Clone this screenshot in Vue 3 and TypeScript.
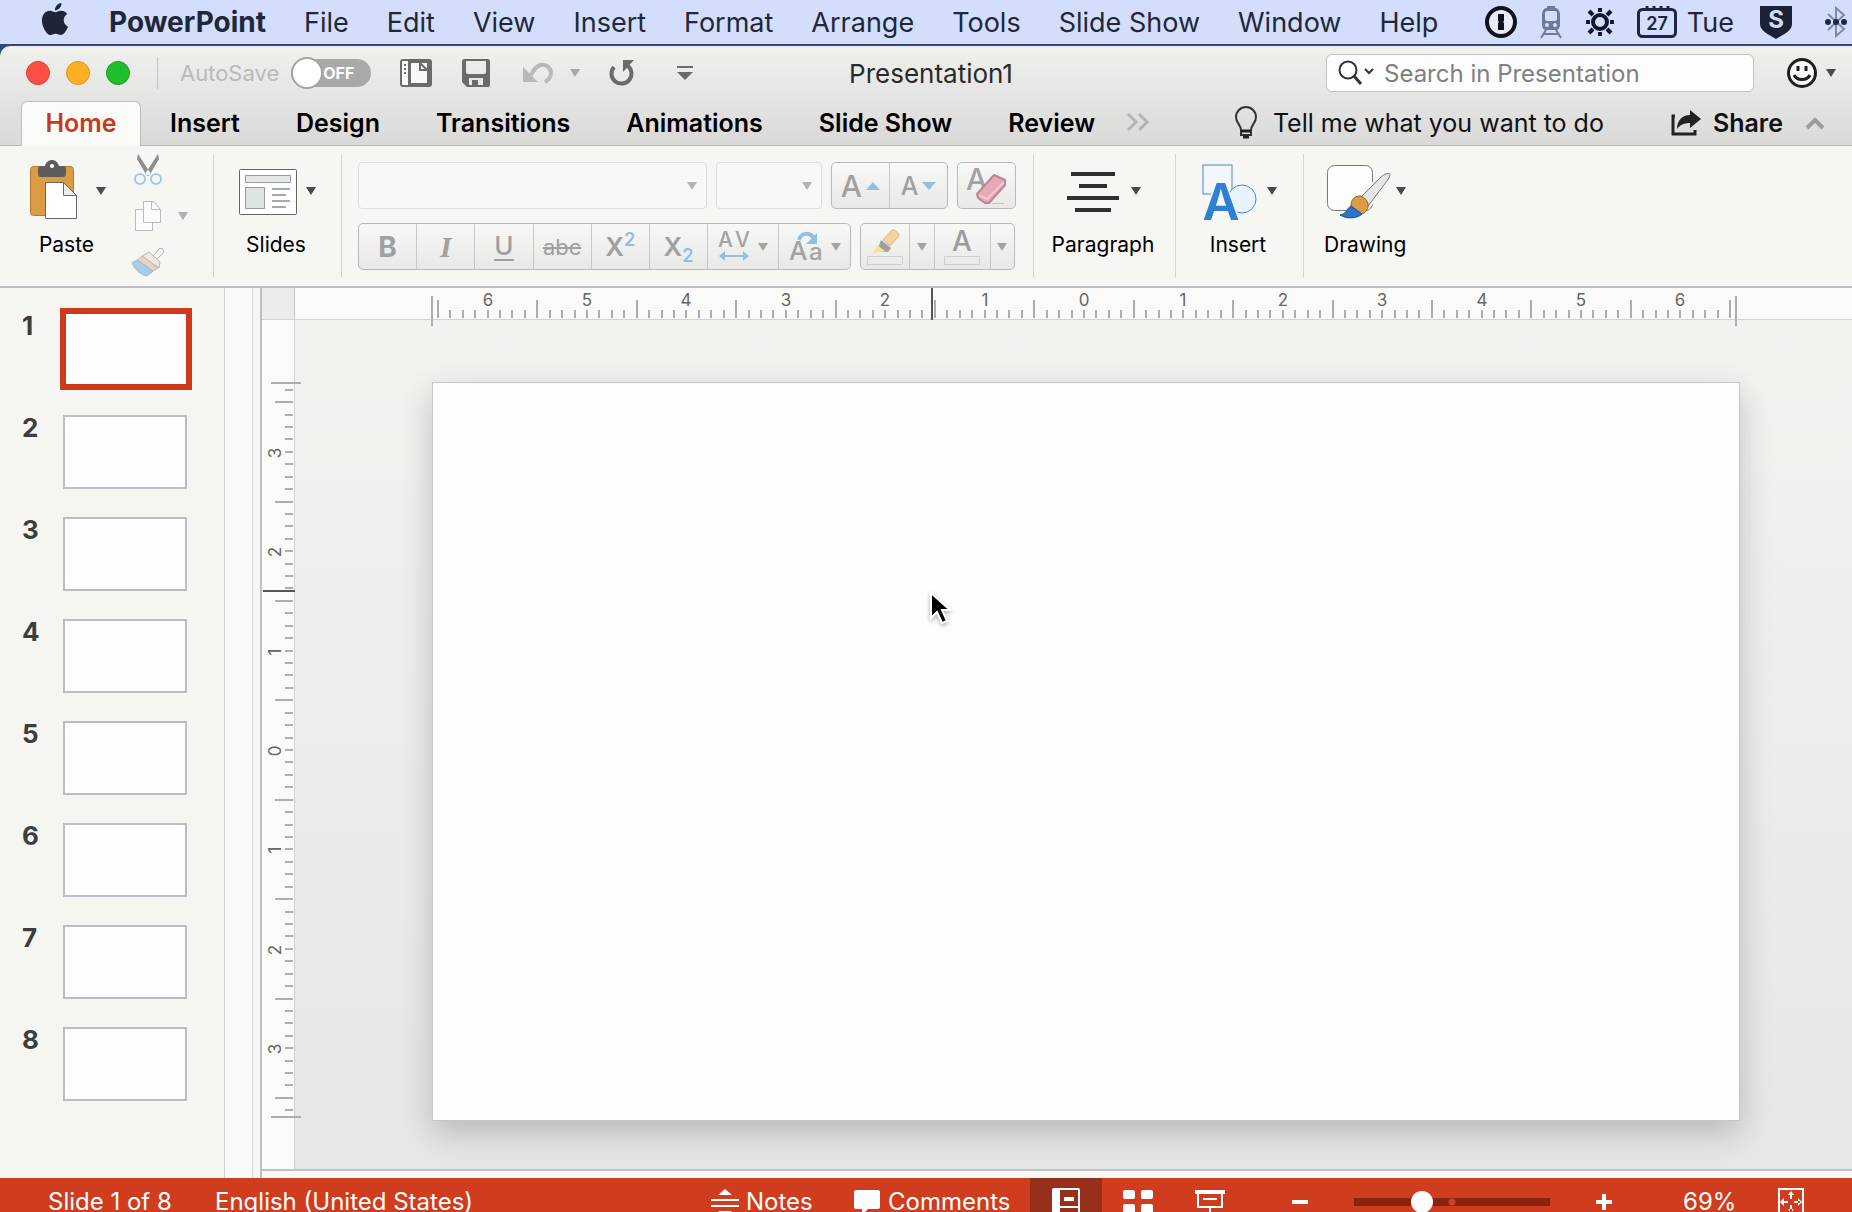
<script setup lang="ts">
import { ref } from 'vue'

const menus = ['File', 'Edit', 'View', 'Insert', 'Format', 'Arrange', 'Tools', 'Slide Show', 'Window', 'Help']
const tabs = ['Insert', 'Design', 'Transitions', 'Animations', 'Slide Show', 'Review']
const slides = [1, 2, 3, 4, 5, 6, 7, 8]

const autoSave = ref(false)
const current = ref(1)
const zoom = ref(69)

interface Tick {
  pos: number
  major: boolean
}

// Eight ticks per inch, with the half-inch marks drawn long.
const INCH = 99.4

function makeTicks(centre: number, count: number): Tick[] {
  const list: Tick[] = []
  for (let i = -count; i <= count; i++) {
    list.push({ pos: Math.round(centre + (i * INCH) / 8), major: Math.abs(i % 8) === 4 })
  }
  return list
}

function makeLabels(centre: number, inches: number) {
  const list: { pos: number; text: number }[] = []
  for (let i = -inches; i <= inches; i++) {
    list.push({ pos: Math.round(centre + i * INCH), text: Math.abs(i) })
  }
  return list
}

const hTicks = makeTicks(788, 52)
const hLabels = makeLabels(789, 6)
const vTicks = makeTicks(429, 29)
const vLabels = makeLabels(429, 3)
</script>

<template>
  <div class="screen">
    <nav class="menubar" aria-label="Menu bar">
      <svg class="apple" width="32" height="32" viewBox="0 0 24 24" aria-hidden="true"><path fill="#1d2536" d="M12.152 6.896c-.948 0-2.415-1.078-3.96-1.04-2.04.027-3.91 1.183-4.961 3.014-2.117 3.675-.546 9.103 1.519 12.09 1.013 1.454 2.208 3.09 3.792 3.039 1.52-.065 2.09-.987 3.935-.987 1.831 0 2.35.987 3.96.948 1.637-.026 2.676-1.48 3.676-2.948 1.156-1.688 1.636-3.325 1.662-3.415-.039-.013-3.182-1.221-3.22-4.857-.026-3.04 2.48-4.494 2.597-4.559-1.429-2.09-3.623-2.324-4.39-2.376-2-.156-3.675 1.09-4.61 1.09zM15.53 3.83c.843-1.012 1.4-2.427 1.245-3.83-1.207.052-2.662.805-3.532 1.818-.78.896-1.454 2.338-1.273 3.714 1.338.104 2.715-.688 3.559-1.701" /></svg>
      <button class="menu app-name">PowerPoint</button>
      <button v-for="m in menus" :key="m" class="menu">{{ m }}</button>
      <div class="tray">
        <svg width="32" height="32" viewBox="0 0 32 32" aria-hidden="true">
          <circle cx="16" cy="16" r="14" fill="#e6ecfd" stroke="#10131c" stroke-width="4" />
          <path fill="#10131c" d="M13 8h6v7l-1 1 1 1v7h-6v-7l1-1-1-1z" />
        </svg>
        <svg width="24" height="34" viewBox="0 0 24 34" aria-hidden="true">
          <path fill="#6d7a9c" fill-rule="evenodd" d="M8 1h8v2h1c3 1 4 4 4 7v10c0 3-2 5-4 5H7c-2 0-4-2-4-5V10c0-3 1-6 4-7h1zM6 8v6c0 1 1 2 2 2h8c1 0 2-1 2-2V8c0-1-1-2-2-2H8c-1 0-2 1-2 2zm0 12a2 2 0 1 0 4 0 2 2 0 0 0-4 0zm8 0a2 2 0 1 0 4 0 2 2 0 0 0-4 0z" />
          <path fill="none" stroke="#6d7a9c" stroke-width="2" d="M7 25l-5 8M17 25l5 8M5 29h14" />
        </svg>
        <svg width="30" height="30" viewBox="0 0 30 30" aria-hidden="true">
          <circle cx="15" cy="15" r="7" fill="none" stroke="#10182e" stroke-width="4" />
          <path stroke="#10182e" stroke-width="4" d="M15 1v4M15 25v4M1 15h4M25 15h4M4 4l4 4M22 22l4 4M26 4l-4 4M8 22l-4 4" />
        </svg>
        <span class="date">
          <svg width="40" height="34" viewBox="0 0 40 34" aria-hidden="true">
            <rect x="1.500" y="4.500" width="37" height="27" rx="4" fill="none" stroke="#1d2740" stroke-width="3" />
            <path stroke="#1d2740" stroke-width="3" d="M10 1v4M17 1v4M24 1v4M31 1v4" />
            <text x="20" y="25" text-anchor="middle" font-size="18" font-weight="600" fill="#1d2740">27</text>
          </svg>
          <span class="day">Tue</span>
        </span>
        <svg class="shield" width="32" height="34" viewBox="0 0 32 34" aria-hidden="true">
          <path fill="#1a2336" d="M0 1h32v18c0 7-8 10-16 15C8 29 0 26 0 19z" />
          <text x="16" y="23" text-anchor="middle" font-size="24" font-weight="700" fill="#d3ddfb">S</text>
        </svg>
        <svg width="24" height="34" viewBox="0 0 24 34" aria-hidden="true">
          <path fill="none" stroke="#7c8aa9" stroke-width="2" d="M4 9l16 15-8 7V3l8 7L4 25" />
          <circle cx="4" cy="17" r="3" fill="#1c2742" /><circle cx="12" cy="17" r="3" fill="#1c2742" /><circle cx="20" cy="17" r="3" fill="#1c2742" />
        </svg>
      </div>
    </nav>

    <div class="window">
      <header class="titlebar">
        <div class="title-left">
          <button class="light red" aria-label="Close"></button>
          <button class="light amber" aria-label="Minimise"></button>
          <button class="light green" aria-label="Full screen"></button>
          <span class="tdiv"></span>
          <label for="autosave" class="autosave">AutoSave</label>
          <span class="toggle">
            <input id="autosave" v-model="autoSave" type="checkbox" />
            <span class="off">OFF</span>
          </span>
          <button class="ico new" aria-label="New from template">
            <svg width="32" height="28" viewBox="0 0 32 28"><rect x="1" y="1" width="30" height="26" rx="2" fill="#f8f8f8" stroke="#6b6b6b" stroke-width="2" /><path fill="#6b6b6b" d="M4 5h2v2H4zM4 9h2v2H4zM4 13h2v2H4zM8 1h3v26H8zM11 1h19v3H11zM11 24h19v3H11zM27 4h4v21h-4z" /><path fill="none" stroke="#6b6b6b" stroke-width="2" d="M20 4v7h7M20 4l7 7" /></svg>
          </button>
          <button class="ico save" aria-label="Save">
            <svg width="30" height="28" viewBox="0 0 30 28"><path fill="#6b6b6b" fill-rule="evenodd" d="M2 0h24c1 0 2 1 2 2v24c0 1-1 2-2 2H5l-5-5V2c0-1 1-2 2-2zm2 2v11c0 1 1 2 2 2h16c1 0 2-1 2-2V2zm3 17v7h3v-5h6v5h5v-7z" /></svg>
          </button>
          <button class="ico undo" aria-label="Undo" disabled>
            <svg width="32" height="22" viewBox="0 0 32 22"><path fill="none" stroke="#b9b9b5" stroke-width="4" d="M9 13C14 3 20 1 25 4c6 4 5 12-2 16" /><path fill="#b9b9b5" d="M1 5v15h15z" /></svg>
          </button>
          <svg class="undo-caret" width="10" height="8" viewBox="0 0 10 8" aria-hidden="true"><path fill="#a8a8a8" d="M0 0h10L5 8z" /></svg>
          <button class="ico redo" aria-label="Repeat">
            <svg width="26" height="28" viewBox="0 0 26 28"><path fill="none" stroke="#6b6b6b" stroke-width="4" d="M5 8a10 10 0 1 0 14-1" /><path fill="#6b6b6b" d="M14 1h11L14 13z" /></svg>
          </button>
          <button class="ico" aria-label="Customise toolbar">
            <svg width="16" height="16" viewBox="0 0 16 16"><path fill="#6b6b6b" d="M0 1h16v2H0zM0 7h16l-8 8z" /></svg>
          </button>
        </div>
        <h1>Presentation1</h1>
        <div class="title-right">
          <label class="search">
            <svg width="36" height="26" viewBox="0 0 36 26" aria-hidden="true"><circle cx="10" cy="10" r="8.500" fill="none" stroke="#333" stroke-width="2" /><path fill="none" stroke="#333" stroke-width="3" d="M16 16l7 8" /><path fill="none" stroke="#333" stroke-width="2" d="M27 9l4 4 4-4" /></svg>
            <input type="text" placeholder="Search in Presentation" aria-label="Search in Presentation" />
          </label>
          <button class="smile" aria-label="Feedback">
            <svg width="32" height="32" viewBox="0 0 32 32"><circle cx="16" cy="16" r="13.500" fill="#f6f6f4" stroke="#1e1e1e" stroke-width="3" /><path fill="none" stroke="#1e1e1e" stroke-width="3" d="M12 9v5M20 9v5M8 18c3 6 13 6 16 0" /></svg>
            <svg width="10" height="8" viewBox="0 0 10 8"><path fill="#4a4a4a" d="M0 0h10L5 8z" /></svg>
          </button>
        </div>
      </header>

      <nav class="tabs" aria-label="Ribbon tabs">
        <button class="tab active">Home</button>
        <button v-for="t in tabs" :key="t" class="tab">{{ t }}</button>
        <svg class="more" width="24" height="20" viewBox="0 0 24 20" aria-hidden="true"><path fill="none" stroke="#b4b4b4" stroke-width="3" d="M2 1l8 8-8 8M13 1l8 8-8 8" /></svg>
        <div class="tabs-right">
          <button class="tell">
            <svg width="22" height="34" viewBox="0 0 22 34"><path fill="none" stroke="#333" stroke-width="2" d="M6 24c0-5-5-7-5-13a10 10 0 0 1 20 0c0 6-5 8-5 13v5H6z" /><path stroke="#222" stroke-width="3" d="M6 25h10M8 31h6" /></svg>
            Tell me what you want to do
          </button>
          <button class="share">
            <svg width="32" height="28" viewBox="0 0 32 28"><path fill="none" stroke="#222" stroke-width="3" d="M5 7H3v18h22v-4" /><path fill="#222" d="M20 1l11 9-11 9v-5c-6 0-10 2-13 6 0-8 5-14 13-14z" /></svg>
            Share
          </button>
          <svg width="20" height="14" viewBox="0 0 20 14" aria-hidden="true"><path fill="none" stroke="#9d9d97" stroke-width="4" d="M2 12l8-8 8 8" /></svg>
        </div>
      </nav>

      <section class="ribbon" aria-label="Home">
        <div class="group g-paste">
          <button class="big">
            <span class="pic">
              <svg width="48" height="64" viewBox="0 0 48 64"><rect x="0.500" y="6.500" width="43" height="49" rx="3" fill="#dc9c45" stroke="#b37a2b" /><path fill="#5d5d5d" d="M8 9c0-2 1-3 3-3h4c1-4 4-6 7-6s6 2 7 6h4c2 0 3 1 3 3v5c0 2-1 3-3 3H11c-2 0-3-1-3-3z" /><circle cx="22" cy="6" r="2" fill="#fff" /><path fill="#fff" stroke="#666" d="M15.500 22.500h18l13 13v23h-31z" /><path fill="#eee" stroke="#666" d="M33.500 22.500v13h13z" /></svg>
              <svg class="caret wide-gap" width="10" height="8" viewBox="0 0 10 8"><path fill="#4a4a4a" d="M0 0h10L5 8z" /></svg>
            </span>
            <span class="cap">Paste</span>
          </button>
          <div class="small">
            <button disabled aria-label="Cut">
              <svg width="32" height="32" viewBox="0 0 32 32"><path fill="#8e8e8e" d="M6 0l13 20-4 2L5 5zM26 0L13 20l4 2L27 5z" /><circle cx="8" cy="25" r="5" fill="#f1f5f8" stroke="#a3c8e0" stroke-width="2" /><circle cx="24" cy="25" r="5" fill="#f1f5f8" stroke="#a3c8e0" stroke-width="2" /></svg>
            </button>
            <button disabled aria-label="Copy">
              <svg width="32" height="32" viewBox="0 0 32 32"><path fill="#fbfbfb" stroke="#bcbcc0" d="M3.500 9.500h17v21h-17z" /><path fill="#fbfbfb" stroke="#bcbcc0" d="M11.500 1.500h10l7 8v13h-17z" /><path fill="none" stroke="#bcbcc0" d="M19.500 1.500v8h9" /></svg>
              <svg width="10" height="8" viewBox="0 0 10 8"><path fill="#b0b0b0" d="M0 0h10L5 8z" /></svg>
            </button>
            <button disabled aria-label="Format painter">
              <svg width="32" height="32" viewBox="0 0 32 32"><path fill="#f4f4f4" stroke="#b4b4b4" d="M21 10l6-7c3-2 6 1 4 4l-7 7z" /><path fill="#efe9e2" stroke="#b4b4b4" d="M17 6l11 10-1 6-17-12z" /><path fill="#e6d3c6" stroke="#c4b8b0" d="M10 10l16 12-5 3L5 14z" /><path fill="#a9cde4" stroke="#9fb7c6" d="M5 14l16 11-6 5C9 29 3 24 0 17z" /></svg>
            </button>
          </div>
        </div>

        <div class="group g-slides">
          <button class="big">
            <span class="pic">
              <svg width="58" height="46" viewBox="0 0 58 46"><rect x="0.500" y="0.500" width="57" height="45" rx="1" fill="#fff" stroke="#666" /><rect x="6.500" y="6.500" width="45" height="7" fill="#e3e7e6" stroke="#9a9aa8" /><rect x="6.500" y="18.500" width="19" height="21" fill="#dfe4e1" stroke="#9a9a9a" /><path stroke="#a8a8a8" stroke-width="2" d="M33 20h18M33 26h14M33 32h18M33 38h14" /></svg>
              <svg class="caret" width="10" height="8" viewBox="0 0 10 8"><path fill="#4a4a4a" d="M0 0h10L5 8z" /></svg>
            </span>
            <span class="cap">Slides</span>
          </button>
        </div>

        <div class="group g-font">
          <div class="frow">
            <span class="combo family"><select disabled aria-label="Font"><option></option></select><svg width="10" height="8" viewBox="0 0 10 8"><path fill="#b4b4b8" d="M0 0h10L5 8z" /></svg></span>
            <span class="combo fsize"><select disabled aria-label="Font size"><option></option></select><svg width="10" height="8" viewBox="0 0 10 8"><path fill="#b4b4b8" d="M0 0h10L5 8z" /></svg></span>
            <div class="seg grow">
              <button disabled aria-label="Increase font size"><span class="g28">A</span><svg width="14" height="8" viewBox="0 0 14 8"><path fill="#93bfe0" d="M0 8h14L7 0z" /></svg></button>
              <button disabled aria-label="Decrease font size"><span class="g24">A</span><svg width="14" height="8" viewBox="0 0 14 8"><path fill="#93bfe0" d="M0 0h14L7 8z" /></svg></button>
            </div>
            <div class="seg erase">
              <button disabled aria-label="Clear formatting">
                <svg width="42" height="42" viewBox="0 -4 42 42"><text x="0" y="21" font-size="30" font-weight="500" fill="#a3a3a3">A</text><path fill="#e7a9b6" stroke="#bd8593" stroke-width="2" stroke-linejoin="round" d="M11 25L28 6l11 5v5L23 34h-4l-7-5z" /><path fill="none" stroke="#f1c9d1" stroke-width="2" d="M13 26l8 4L38 13" /><path stroke="#c4c4c4" d="M26 34.500h12" /></svg>
              </button>
            </div>
          </div>
          <div class="frow">
            <div class="seg style">
              <button disabled aria-label="Bold"><b>B</b></button>
              <button disabled aria-label="Italic"><i>I</i></button>
              <button disabled aria-label="Underline"><span class="under">U</span></button>
              <button disabled aria-label="Strikethrough"><s>abc</s></button>
              <button disabled aria-label="Superscript"><span class="script">X<sup>2</sup></span></button>
              <button disabled aria-label="Subscript"><span class="script">X<sub>2</sub></span></button>
              <button disabled class="wide" aria-label="Character spacing">
                <svg width="32" height="40" viewBox="0 -4 32 40"><text x="0" y="16" font-size="21" font-weight="500" fill="#a3a3a3">A</text><text x="17" y="16" font-size="21" font-weight="500" fill="#a3a3a3">V</text><path fill="#93bfe0" d="M1 25l6-5v4h18v-4l6 5-6 5v-4H7v4z" /></svg>
                <svg width="10" height="8" viewBox="0 0 10 8"><path fill="#a3a3a3" d="M0 0h10L5 8z" /></svg>
              </button>
              <button disabled class="wide" aria-label="Change case">
                <svg width="34" height="40" viewBox="0 -4 34 40"><text x="0" y="29" font-size="26" font-weight="500" fill="#a3a3a3">A</text><text x="20" y="29" font-size="24" font-weight="500" fill="#a3a3a3">a</text><path fill="none" stroke="#93bfe0" stroke-width="4" d="M10 9c2-8 12-8 15-1" /><path fill="#93bfe0" d="M28 2v11H17z" /></svg>
                <svg width="10" height="8" viewBox="0 0 10 8"><path fill="#a3a3a3" d="M0 0h10L5 8z" /></svg>
              </button>
            </div>
            <div class="seg paint">
              <button disabled class="p-main" aria-label="Highlight colour">
                <svg width="38" height="38" viewBox="0 0 38 38"><path fill="#f5d3a1" stroke="#dcb57b" d="M17 12L26 2c2-1 8 4 7 6l-9 10z" /><path fill="#9f9f9f" d="M15 12l10 8-3 4-11-1z" /><path fill="#f3e58f" d="M11 17l8 6-12 2z" /><rect x="1.500" y="28.500" width="35" height="8" fill="none" stroke="#cfcfd2" /></svg>
              </button>
              <button disabled class="p-caret" aria-label="Highlight options"><svg width="10" height="8" viewBox="0 0 10 8"><path fill="#a3a3a3" d="M0 0h10L5 8z" /></svg></button>
              <button disabled class="p-main alt" aria-label="Font colour">
                <svg width="38" height="46" viewBox="0 -4 38 46"><text x="19" y="23" text-anchor="middle" font-size="28" font-weight="500" fill="#9c9c9c">A</text><rect x="1.500" y="28.500" width="35" height="8" fill="none" stroke="#cfcfd2" /></svg>
              </button>
              <button disabled class="p-caret" aria-label="Font colour options"><svg width="10" height="8" viewBox="0 0 10 8"><path fill="#a3a3a3" d="M0 0h10L5 8z" /></svg></button>
            </div>
          </div>
        </div>

        <div class="group g-para">
          <button class="big">
            <span class="pic">
              <svg width="52" height="42" viewBox="0 0 52 42"><path stroke="#2f2f2f" stroke-width="4" d="M4 3h44M12 15h28M0 27h52M8 39h36" /></svg>
              <svg class="caret far" width="10" height="8" viewBox="0 0 10 8"><path fill="#4a4a4a" d="M0 0h10L5 8z" /></svg>
            </span>
            <span class="cap">Paragraph</span>
          </button>
        </div>

        <div class="group g-insert">
          <button class="big">
            <span class="pic">
              <svg width="56" height="58" viewBox="0 0 56 58"><rect x="1" y="2" width="29" height="29" fill="#f1f7fd" stroke="#4a88c4" /><circle cx="40" cy="36" r="14" fill="#e9f3fc" stroke="#4a88c4" /><text x="19" y="57" text-anchor="middle" font-size="51" font-weight="600" fill="#2f7fd6" stroke="#f6f6f4" stroke-width="3" paint-order="stroke">A</text></svg>
              <svg class="caret" width="10" height="8" viewBox="0 0 10 8"><path fill="#4a4a4a" d="M0 0h10L5 8z" /></svg>
            </span>
            <span class="cap">Insert</span>
          </button>
        </div>

        <div class="group last">
          <button class="big">
            <span class="pic">
              <svg width="64" height="50" viewBox="0 2 64 50"><rect x="0.500" y="0.500" width="45" height="45" rx="7" fill="#fdfdfd" stroke="#777" /><path fill="#e6e6e4" stroke="#f6f6f4" stroke-width="5" d="M32 34L55 11c4-3 8-3 8-2 0 2-1 4-3 7L41 41z" /><path fill="#e6e6e4" stroke="#777" d="M32 34L55 11c4-3 8-3 8-2 0 2-1 4-3 7L41 41z" /><path fill="#dc9c45" stroke="#8b6530" d="M24 41c0-6 3-10 9-10 5 1 9 6 8 11-1 4-4 7-7 7z" /><path fill="#2b73c9" stroke="#1d4f8e" d="M13 50c7-1 6-6 11-9l11 8c-5 5-16 5-22 1z" /></svg>
              <svg class="caret tight" width="10" height="8" viewBox="0 0 10 8"><path fill="#4a4a4a" d="M0 0h10L5 8z" /></svg>
            </span>
            <span class="cap">Drawing</span>
          </button>
        </div>
      </section>

      <main class="work">
        <ol class="thumbs">
          <li v-for="n in slides" :key="n" :class="{ on: n === current }">
            <span class="num">{{ n }}</span>
            <button class="thumb" :aria-label="'Slide ' + n" @click="current = n"></button>
          </li>
        </ol>
        <div class="gutter"></div>
        <div class="splitter"></div>
        <div class="editor">
          <div class="hruler">
            <div class="corner"></div>
            <svg width="1557" height="42" viewBox="0 0 1557 42" aria-hidden="true">
              <path stroke="#adadad" stroke-width="2" d="M137 8v30M1441 8v30" />
              <rect v-for="t in hTicks" :key="t.pos" :x="t.pos" :y="t.major ? 12 : 22" width="2" :height="t.major ? 18 : 8" fill="#adadad" />
              <text v-for="l in hLabels" :key="l.pos" :x="l.pos" y="18" text-anchor="middle" class="rl">{{ l.text }}</text>
              <rect x="636" y="0" width="2" height="32" fill="#555" />
            </svg>
          </div>
          <div class="below">
            <div class="vruler">
              <svg width="40" height="848" viewBox="0 0 40 848" aria-hidden="true">
                <path stroke="#adadad" stroke-width="2" d="M9 63h30M9 797h30" />
                <rect v-for="t in vTicks" :key="t.pos" :x="t.major ? 13 : 23" :y="t.pos" :width="t.major ? 18 : 8" height="2" fill="#adadad" />
                <text v-for="l in vLabels" :key="l.pos" :transform="`translate(19 ${l.pos + 2}) rotate(-90)`" text-anchor="middle" class="rl">{{ l.text }}</text>
                <rect x="1" y="270" width="32" height="2" fill="#555" />
              </svg>
            </div>
            <div class="canvas">
              <div class="slide">
                <svg class="pointer" width="24" height="36" viewBox="0 0 24 36" aria-hidden="true"><path fill="#000" stroke="#fff" stroke-width="2" d="M2 2v25l6-6 5 11 5-2-5-11h8z" /></svg>
              </div>
            </div>
          </div>
          <div class="notes-edge"></div>
        </div>
      </main>
    </div>

    <footer class="status">
      <span class="st-slide">Slide {{ current }} of 8</span>
      <button class="st-lang">English (United States)</button>
      <button class="st-notes"><svg width="28" height="28" viewBox="0 0 28 28"><path fill="#fff" d="M7 7l7-6 7 6zM0 11h28v2H0zM0 17h28v2H0zM7 23h14l-7 6z" /></svg>Notes</button>
      <button class="st-comments"><svg width="26" height="26" viewBox="0 0 26 26"><path fill="#fff" d="M2 1h22c1 0 2 1 2 2v15c0 1-1 2-2 2H14l-6 6v-6H2c-1 0-2-1-2-2V3c0-1 1-2 2-2z" /></svg>Comments</button>
      <div class="views">
        <button class="view on" aria-label="Normal view"><svg width="28" height="32" viewBox="0 0 28 32"><rect x="1" y="1" width="26" height="30" rx="1" fill="none" stroke="#fff" stroke-width="2" /><path fill="#fff" d="M1 1h7v30H1zM12 9h10v4H12zM8 18h19v2H8z" /></svg></button>
        <button class="view" aria-label="Slide sorter"><svg width="30" height="32" viewBox="0 0 30 32"><g fill="#fff"><rect x="0" y="2" width="12" height="9" rx="2" /><rect x="18" y="2" width="12" height="9" rx="2" /><rect x="0" y="16" width="12" height="9" rx="2" /><rect x="18" y="16" width="12" height="9" rx="2" /></g></svg></button>
        <button class="view" aria-label="Slide show"><svg width="30" height="32" viewBox="0 0 30 32"><path fill="#fff" d="M0 2h30v4H0zM8 10h14v2H8zM14 20h2v8h-2z" /><path fill="none" stroke="#fff" stroke-width="2" d="M3 5v14h24V5" /></svg></button>
      </div>
      <div class="zoom">
        <button aria-label="Zoom out"><svg width="16" height="16" viewBox="0 0 16 16"><path fill="#fff" d="M0 6h16v4H0z" /></svg></button>
        <input v-model="zoom" type="range" min="10" max="190" aria-label="Zoom" />
        <button aria-label="Zoom in"><svg width="16" height="16" viewBox="0 0 16 16"><path fill="#fff" d="M0 6h16v4H0zM6 0h4v16H6z" /></svg></button>
        <output>{{ zoom }}%</output>
        <button class="fit" aria-label="Fit slide to window"><svg width="26" height="32" viewBox="0 0 26 32"><rect x="1" y="1" width="24" height="30" fill="none" stroke="#fff" stroke-width="2" /><path fill="#fff" d="M12 5h2v6h-2zM12 17h2v7h-2zM4 13h6v2H4zM16 13h6v2h-6zM10 7l3-4 3 4zM10 21l3 4 3-4zM6 10v8l-4-4zM20 10v8l4-4z" /></svg></button>
      </div>
    </footer>
  </div>
</template>

<style>
html,
body,
#app {
  height: 100%;
}
</style>

<style scoped>
.screen {
  display: flex;
  flex-direction: column;
  height: 100vh;
  overflow: hidden;
  background: #31467f;
  font-family: Inter, 'Liberation Sans', sans-serif;
  color: #111;
}
.screen * {
  box-sizing: border-box;
}
button {
  border: 0;
  padding: 0;
  background: none;
  font: inherit;
  color: inherit;
}
svg {
  display: block;
  flex: none;
  overflow: visible;
}

.menubar {
  display: flex;
  align-items: center;
  gap: 38px;
  flex: none;
  height: 44px;
  padding-left: 39px;
  background: #d3defc;
  font-size: 27px;
  color: #1f2739;
  white-space: nowrap;
}
.apple {
  margin: 0 0 6px;
}
.app-name {
  font-size: 28px;
  font-weight: 700;
}
.tray {
  display: flex;
  align-items: center;
  gap: 22px;
  margin-left: auto;
  padding-right: 4px;
}
.date {
  display: flex;
  align-items: center;
  gap: 10px;
  margin-right: 4px;
}
.shield {
  margin-right: 10px;
}

.window {
  flex: 1;
  min-height: 0;
  display: flex;
  flex-direction: column;
  margin-top: 2px;
  border-radius: 10px 0 0 0;
  overflow: hidden;
  background: linear-gradient(#f0f0ed, #d9d9d8 100px);
}
.titlebar {
  display: flex;
  align-items: center;
  flex: none;
  height: 54px;
}
.title-left,
.title-right {
  display: flex;
  align-items: center;
  flex: 1 1 0;
}
.title-left {
  padding-left: 26px;
}
.light {
  width: 24px;
  height: 24px;
  margin-right: 16px;
  border-radius: 50%;
}
.red {
  background: #fc5047;
  border: 1px solid #dd3e36;
}
.amber {
  background: #fdb023;
  border: 1px solid #dd9418;
}
.green {
  background: #1fbe2f;
  border: 1px solid #16a024;
}
.tdiv {
  width: 1px;
  height: 32px;
  margin: 0 22px 0 11px;
  background: #c6c6c4;
}
.autosave {
  margin-right: 12px;
  font-size: 22px;
  color: #bababa;
}
.toggle {
  position: relative;
  width: 80px;
  height: 28px;
  margin-right: 29px;
}
.toggle input {
  appearance: none;
  width: 80px;
  height: 28px;
  margin: 0;
  border-radius: 14px;
  background: #a9a9a8;
  display: flex;
  align-items: center;
}
.toggle input::before {
  content: '';
  width: 28px;
  height: 28px;
  border: 2px solid #a4a4a2;
  border-radius: 50%;
  background: #fff;
}
.off {
  position: absolute;
  left: 32px;
  top: 4px;
  font-size: 16px;
  line-height: 20px;
  font-weight: 700;
  color: #fff;
  pointer-events: none;
}
.new,
.save {
  margin-right: 30px;
}
.undo {
  margin-right: 16px;
}
.undo-caret {
  margin-right: 29px;
}
.redo {
  margin-right: 42px;
}
h1 {
  margin: 0;
  font-size: 26px;
  font-weight: 400;
  color: #2a2a2a;
}
.title-right {
  justify-content: flex-end;
  padding-right: 16px;
  gap: 32px;
}
.search {
  display: flex;
  align-items: center;
  gap: 10px;
  width: 428px;
  height: 38px;
  padding: 0 11px;
  border: 1px solid #c2c2c6;
  border-radius: 6px;
  background: #fdfdfd;
}
.search input {
  flex: 1;
  min-width: 0;
  border: 0;
  padding: 0;
  outline: 0;
  background: none;
  font: 24px Inter, sans-serif;
}
.search input::placeholder {
  color: #808080;
  opacity: 1;
}
.smile {
  display: flex;
  align-items: center;
  gap: 8px;
}

.tabs {
  display: flex;
  align-items: center;
  flex: none;
  height: 46px;
  padding-left: 21px;
  border-bottom: 1px solid #b8b8bc;
  font-size: 25px;
  white-space: nowrap;
}
.tab {
  margin-right: 56px;
  font-weight: 600;
  color: #000;
}
.tab.active {
  align-self: flex-end;
  width: 120px;
  height: 45px;
  margin: 0 29px -1px 0;
  padding-bottom: 2px;
  border: 1px solid #bdbdbd;
  border-bottom: 0;
  border-radius: 6px 6px 0 0;
  background: #fafaf8;
  color: #c73a1d;
}
.more {
  margin-left: -25px;
}
.tabs-right {
  display: flex;
  align-items: center;
  margin-left: auto;
  padding-right: 27px;
}
.tell,
.share {
  display: flex;
  align-items: center;
}
.tell {
  gap: 16px;
  margin-right: 66px;
}
.share {
  gap: 11px;
  margin-right: 22px;
  font-weight: 600;
}

.ribbon {
  display: flex;
  flex: none;
  height: 142px;
  padding: 8px 0 9px;
  border-bottom: 2px solid #bdbdc4;
  background: #f6f6f3;
}
.group {
  display: flex;
  flex: none;
  border-right: 1px solid #d4d4d6;
}
.g-paste {
  width: 214px;
  padding-left: 30px;
  gap: 26px;
}
.g-slides {
  width: 128px;
  padding-left: 25px;
}
.g-para {
  width: 142px;
  justify-content: center;
}
.g-insert {
  width: 128px;
  justify-content: center;
}
.last {
  border-right: 0;
  padding-left: 20px;
}
.big {
  display: flex;
  flex-direction: column;
  align-items: center;
}
.pic {
  display: flex;
  align-items: center;
  height: 76px;
}
.caret {
  margin: 0 0 2px 9px;
}
.caret.wide-gap {
  margin-left: 18px;
}
.caret.far {
  margin-left: 12px;
}
.caret.tight {
  margin-left: 5px;
}
.cap {
  padding-right: 3px;
  font-size: 21px;
  line-height: 30px;
  color: #000;
}
.small {
  display: flex;
  flex-direction: column;
  gap: 14px;
}
.small button {
  display: flex;
  align-items: center;
  gap: 14px;
}

.g-font {
  width: 692px;
  flex-direction: column;
  gap: 14px;
  padding: 8px 0 0 16px;
}
.frow {
  display: flex;
  height: 47px;
}
.combo {
  display: flex;
  position: relative;
  margin-right: 9px;
}
.combo select {
  appearance: none;
  width: 100%;
  border: 1px solid #d5d5da;
  border-radius: 4px;
  background: #fafaf8;
}
.combo svg {
  position: absolute;
  right: 10px;
  top: 20px;
}
.family {
  width: 349px;
}
.fsize {
  width: 106px;
}
.seg {
  display: flex;
  border: 1px solid #b9b9bb;
  border-radius: 5px;
  background: linear-gradient(#f8f8f6, #e8e8e7);
  color: #a0a0a0;
}
.seg button {
  display: flex;
  flex: 1;
  align-items: center;
  justify-content: center;
  gap: 4px;
  border-right: 1px solid #c8c8ca;
  font-size: 26px;
}
.seg button:last-child {
  border-right: 0;
}
.grow {
  width: 117px;
  margin-right: 9px;
}
.g28 {
  font-size: 30px;
  font-weight: 500;
}
.g24 {
  font-size: 25px;
  font-weight: 500;
}
.erase {
  width: 59px;
}
.style {
  width: 493px;
  margin-right: 9px;
}
.seg button.wide {
  flex: 0 0 71px;
  gap: 8px;
}
.style b {
  font-size: 28px;
}
.style i {
  font: italic bold 30px 'Liberation Serif', serif;
}
.under {
  line-height: 26px;
  border-bottom: 2px solid #a0a0a0;
  font-weight: 500;
}
.style s {
  font-size: 22px;
}
.script {
  font-weight: 600;
}
.script sup,
.script sub {
  font-size: 18px;
  line-height: 0;
  color: #93bfe0;
}
.paint {
  width: 155px;
}
.seg .p-main {
  flex: 0 0 49px;
}
.seg .p-main.alt {
  flex-basis: 56px;
}

.work {
  display: flex;
  flex: 1;
  min-height: 0;
}
.thumbs {
  display: flex;
  flex-direction: column;
  gap: 28px;
  flex: 0 0 225px;
  margin: 0;
  padding: 25px 0 0 22px;
  list-style: none;
  border-right: 1px solid #d0d0d4;
  background: #f5f5f2;
}
.thumbs li {
  display: flex;
  height: 74px;
}
.num {
  width: 41px;
  font-size: 26px;
  line-height: 26px;
  font-weight: 700;
  color: #3d3d3d;
}
.thumb {
  width: 124px;
  height: 74px;
  border: 2px solid #bcbcc4;
  background: #fdfdfd;
}
.on .thumb {
  width: 132px;
  height: 82px;
  margin: -5px 0 0 -3px;
  border: 6px solid #cf391b;
}
.gutter {
  flex: 0 0 28px;
  border-right: 1px solid #dadadc;
  background: #f9f9f8;
}
.splitter {
  flex: 0 0 9px;
  border-right: 2px solid #bfbfc2;
  background: #f5f5f3;
}
.editor {
  display: flex;
  flex-direction: column;
  flex: 1;
  min-width: 0;
  background: #f9f9f8;
}
.hruler {
  position: relative;
  z-index: 1;
  display: flex;
  flex: none;
  height: 32px;
  border-bottom: 1px solid #d3d3d0;
  background: #fafaf8;
}
.corner {
  flex: 0 0 33px;
  background: #ececea;
  border-right: 1px solid #c8c8cc;
}
.rl {
  font-size: 17px;
  fill: #666;
}
.below {
  display: flex;
  flex: 1;
  min-height: 0;
}
.vruler {
  position: relative;
  z-index: 1;
  flex: 0 0 33px;
  min-width: 0;
  border-right: 1px solid #d3d3d0;
  background: #fafaf8;
}
.canvas {
  display: flex;
  flex: 1;
  padding: 62px 112px 48px 137px;
  background: linear-gradient(#f2f2ef, #e6e6e6);
  overflow: hidden;
}
.slide {
  position: relative;
  flex: 1;
  border: 1px solid #c6c6c6;
  background: #fdfdfd;
  box-shadow: 0 12px 30px rgba(0, 0, 0, 0.2);
}
.pointer {
  position: absolute;
  left: 496px;
  top: 208px;
  filter: drop-shadow(0 2px 2px rgba(0, 0, 0, 0.3));
}
.notes-edge {
  flex: 0 0 9px;
  border-top: 2px solid #c0c0c8;
  background: #f8f8f6;
}

.status {
  display: flex;
  flex: none;
  height: 34px;
  padding-left: 48px;
  background: #cf3c1e;
  color: #fff;
  font-size: 24px;
  line-height: 48px;
  white-space: nowrap;
  overflow: hidden;
}
.status button {
  display: flex;
  align-items: center;
  height: 48px;
  line-height: 48px;
}
.st-slide {
  width: 167px;
}
.status .st-lang {
  width: 496px;
}
.status .st-notes {
  gap: 7px;
  width: 143px;
}
.status .st-comments {
  gap: 8px;
  width: 176px;
}
.views {
  display: flex;
}
.status .view {
  align-items: flex-start;
  justify-content: center;
  width: 72px;
  padding-top: 10px;
}
.view.on {
  background: #97301a;
}
.zoom {
  display: flex;
  height: 48px;
  align-items: center;
  margin-left: auto;
  padding-right: 48px;
}
.zoom input {
  appearance: none;
  width: 196px;
  height: 24px;
  margin: 0 46px;
  background:
    radial-gradient(circle, #c8452b 3px, transparent 4px),
    linear-gradient(#88230f, #88230f) center / 100% 8px no-repeat;
}
.zoom input::-webkit-slider-thumb {
  appearance: none;
  width: 22px;
  height: 22px;
  border-radius: 50%;
  background: #fff;
}
.zoom output {
  width: 95px;
  margin-left: 71px;
}
.status .fit {
  align-items: flex-start;
  padding-top: 10px;
}
</style>
